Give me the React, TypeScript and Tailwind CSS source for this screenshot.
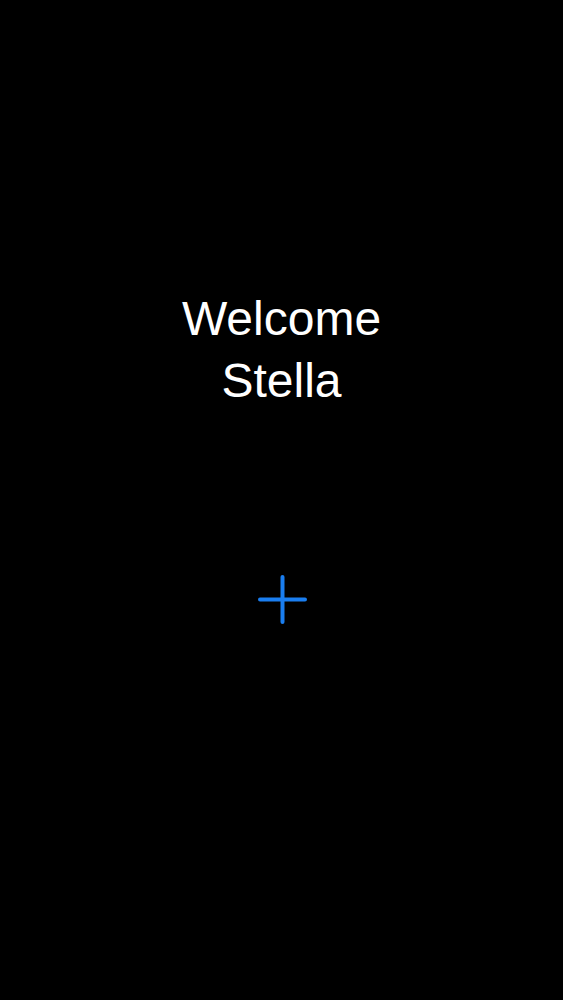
export default function App() {
  return (
    <div className="w-[563px] h-[1000px] bg-black flex flex-col items-center pt-[288px]" style={{ fontFamily: '"Liberation Sans", Arial, sans-serif' }}>
      <div className="text-white text-[48px] leading-[62px] text-center">
        <div>Welcome</div>
        <div>Stella</div>
      </div>
      <div className="mt-[163px] ml-[1px]">
        <svg width="49" height="49" viewBox="0 0 49 49">
          <line x1="24.5" y1="2" x2="24.5" y2="47" stroke="#1a7ef0" strokeWidth="4" strokeLinecap="round" />
          <line x1="2" y1="24.5" x2="47" y2="24.5" stroke="#1a7ef0" strokeWidth="4" strokeLinecap="round" />
        </svg>
      </div>
    </div>
  );
}
